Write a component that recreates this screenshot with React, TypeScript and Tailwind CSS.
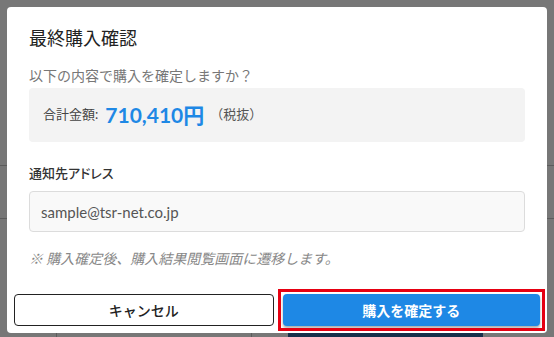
const FONT = "font-['Lato','Noto_Sans_CJK_JP',sans-serif]";

function BackgroundPage() {
  return (
    <div className="flex h-[337px] flex-col bg-[#777777]">
      <div className="h-[166px] border-b border-[#5c5c5c]" />
      <div className="h-[53px] border-b border-[#5c5c5c]" />
      <div className="flex-1" />
      <div className="flex h-[4px]">
        <div className="w-[57px] border-r border-[#5c5c5c]" />
        <div className="w-[195px] border-r border-[#5c5c5c]" />
        <div className="w-[36px]" />
        <div className="w-[195px] bg-[#172f4a]" />
      </div>
    </div>
  );
}

function ConfirmDialog() {
  return (
    <div className="absolute left-[7px] top-[7px] w-[540px] rounded-[4px] bg-white pb-[7px]">
      <div className="px-[22px] pt-[18px]">
        <h2 className="text-[18px] leading-[26px] font-normal text-[#222]">最終購入確認</h2>
        <p className="mt-[15px] text-[14px] leading-[20px] text-[#777]">
          以下の内容で購入を確定しますか？
        </p>
        <div className="mt-[2px] flex h-[54px] items-center rounded-[4px] bg-[#f3f3f3] px-[14px]">
          <span className="text-[13px] text-[#444]">合計金額:</span>
          <span className="ml-[7px] text-[21px] font-bold text-[#1e88e5]">710,410円</span>
          <span className="ml-[6px] text-[13px] text-[#555]">（税抜）</span>
        </div>
        <div className="mt-[21px] text-[13px] leading-[20px] font-medium text-[#333] [font-feature-settings:'palt']">
          通知先アドレス
        </div>
        <input
          readOnly
          value="sample@tsr-net.co.jp"
          className={`mt-[8px] block h-[41px] w-full rounded-[4px] border border-[#dcdcdc] bg-[#f9f9f9] px-[11px] text-[15px] text-[#555] outline-none ${FONT}`}
        />
        <p className="mt-[17px] text-[14px] leading-[20px] italic text-[#888]">
          ※ 購入確定後、購入結果閲覧画面に遷移します。
        </p>
      </div>
      <div className="mt-[25px] flex gap-[9px] px-[7px]">
        <button className="h-8 flex-1 rounded-[4px] border border-[#222] bg-white text-[14px] font-medium text-[#222]">
          キャンセル
        </button>
        <div className="flex-1 outline-[3px] outline-offset-[2px] outline-[#e60012] outline-solid">
          <button className="h-8 w-full rounded-[4px] bg-[#1e88e5] text-[14px] font-bold text-white shadow-[0_2px_3px_rgba(0,0,0,0.35)]">
            購入を確定する
          </button>
        </div>
      </div>
    </div>
  );
}

export default function App() {
  return (
    <div className={`relative h-[337px] w-[554px] overflow-hidden ${FONT}`}>
      <BackgroundPage />
      <ConfirmDialog />
    </div>
  );
}
